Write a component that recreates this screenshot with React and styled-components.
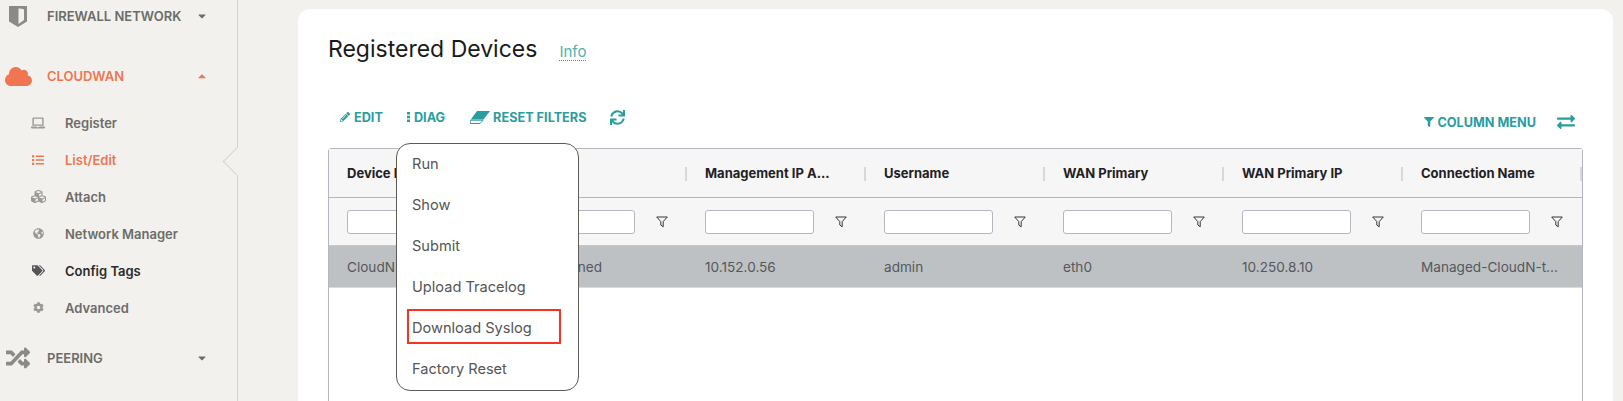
import React from 'react';
import styled, { createGlobalStyle } from 'styled-components';
import {
  FaCaretDown, FaCaretUp, FaCloud, FaLaptop, FaList, FaCubes, FaGlobeAmericas, FaTags, FaCog,
  FaRandom, FaPencilAlt, FaSync, FaFilter, FaExchangeAlt,
} from 'react-icons/fa';

const GlobalStyle = createGlobalStyle`
  html, body {
    margin: 0;
    height: 401px;
    overflow: hidden;
    background: #f2f1ee;
    font-family: Inter, "Liberation Sans", sans-serif;
  }
`;

const Page = styled.div`
  display: flex;
  width: 1623px;
  height: 401px;
  overflow: hidden;
`;

const Sidebar = styled.nav`
  position: relative;
  flex: 0 0 238px;
  box-sizing: border-box;
  border-right: 1px solid #d4d3d0;
  padding-top: 4px;
`;

const Notch = styled.div`
  position: absolute;
  top: 151px;
  right: -11px;
  width: 21px;
  height: 21px;
  box-sizing: border-box;
  background: #f2f1ee;
  border-left: 1px solid #d4d3d0;
  border-bottom: 1px solid #d4d3d0;
  transform: rotate(45deg);
`;

const GroupRow = styled.div`
  display: flex;
  align-items: center;
  height: 24px;
  margin-top: ${({ $top }) => $top || 0}px;
  color: ${({ $active }) => ($active ? '#ef7651' : '#6d6c69')};
  font-size: 13px;
  font-weight: 600;
`;

const GroupIcon = styled.span`
  flex: 0 0 47px;
  display: flex;
  justify-content: center;
  padding-right: 11px;
  box-sizing: border-box;
  font-size: ${({ $size }) => $size || 24}px;
  color: ${({ $active }) => ($active ? '#ef7651' : '#8b8a87')};
`;

const GroupLabel = styled.span`
  flex: 0 0 149px;
`;

const Caret = styled.span`
  display: flex;
  font-size: 12px;
`;

const SubList = styled.div`
  margin-top: 16px;
  margin-bottom: 20px;
`;

const SubItem = styled.div`
  display: flex;
  align-items: center;
  height: 37px;
  padding-left: 20px;
  color: ${({ $color }) => $color || '#6d6c69'};
  font-size: 13px;
  font-weight: 600;
`;

const SubIcon = styled.span`
  flex: 0 0 45px;
  display: flex;
  justify-content: center;
  padding-right: 9px;
  box-sizing: border-box;
  font-size: ${({ $size }) => $size || 13}px;
  color: ${({ $color }) => $color || '#9a9996'};
`;

const Main = styled.main`
  flex: 1;
  padding: 9px 10px 0 60px;
  min-width: 0;
`;

const Card = styled.section`
  position: relative;
  height: 420px;
  box-sizing: border-box;
  background: #fff;
  border-radius: 12px 12px 0 0;
  padding: 20px 30px 0;
`;

const TitleRow = styled.div`
  display: flex;
  align-items: baseline;
  height: 40px;
`;

const Title = styled.h1`
  margin: 0;
  font-size: 23px;
  font-weight: 400;
  color: #1a1a1a;
  line-height: 40px;
`;

const InfoLink = styled.a`
  margin-left: 22px;
  font-size: 15px;
  color: #4fb3b1;
  border-bottom: 1px dotted #2a9d9f;
  line-height: 17px;
`;

const Toolbar = styled.div`
  display: flex;
  align-items: center;
  height: 32px;
  margin-top: 32px;
  padding: 0 8px 0 12px;
`;

const ToolButton = styled.button`
  display: flex;
  align-items: center;
  gap: ${({ $gap }) => $gap || 4}px;
  margin: ${({ $margin }) => $margin || '0 24px 0 0'};
  padding: 0;
  border: 0;
  background: none;
  color: #2a9d9f;
  font-family: inherit;
  font-size: 12.7px;
  font-weight: 700;
  svg { display: block; }
`;

const Spacer = styled.div`
  flex: 1;
`;

const TableBox = styled.div`
  height: 300px;
  border: 1px solid #b4b6c0;
  border-radius: 3px 3px 0 0;
  margin-top: 15px;
`;

const Row = styled.div`
  display: grid;
  grid-template-columns: repeat(7, 179px);
  overflow: hidden;
  height: ${({ $height }) => $height}px;
  box-sizing: border-box;
  background: ${({ $bg }) => $bg};
  border-bottom: 1px solid ${({ $line }) => $line};
`;

const HeadCell = styled.div`
  position: relative;
  display: flex;
  align-items: center;
  padding-left: 18px;
  font-size: 13px;
  font-weight: 700;
  color: #1f2024;
  &::after {
    content: '';
    position: absolute;
    right: 0;
    top: 18px;
    width: 2px;
    height: 14px;
    background: #d6d8dc;
  }
`;

const FilterCell = styled.div`
  display: flex;
  align-items: center;
  padding-left: 18px;
`;

const FilterInput = styled.input`
  width: 109px;
  height: 24px;
  box-sizing: border-box;
  border: 1px solid #b4b6c0;
  border-radius: 3px;
  background: #fff;
`;

const FilterMark = styled.svg`
  width: 12px;
  height: 12px;
  margin-left: 21px;
  fill: none;
  stroke: #33353a;
  stroke-width: 1;
`;

const DataCell = styled.div`
  display: flex;
  align-items: center;
  padding-left: 18px;
  font-size: 13.6px;
  color: #55585c;
  white-space: nowrap;
`;

const Menu = styled.ul`
  position: absolute;
  left: 98px;
  top: 134px;
  width: 183px;
  height: 248px;
  box-sizing: border-box;
  margin: 0;
  padding: 0;
  list-style: none;
  background: #fff;
  border: 1px solid #5e5a56;
  border-radius: 14px;
`;

const MenuItem = styled.li`
  display: flex;
  align-items: center;
  height: 41px;
  box-sizing: border-box;
  padding: 0 0 1px 15px;
  font-size: 14.6px;
  color: #555;
`;

const Highlight = styled.div`
  position: absolute;
  left: 10px;
  top: 165px;
  width: 154px;
  height: 35px;
  box-sizing: border-box;
  border: 2px solid #f5331f;
`;

const ShieldIcon = () => (
  <svg width="18" height="21" viewBox="0 0 18 21">
    <path fillRule="evenodd" d="M0 0h18v15.5L9 21 0 15.5zM9.5 2.5V18L15 14V3.5C14 2.7 11 2.5 9.5 2.5z" fill="#8b8a87" />
  </svg>
);

const EraserIcon = () => (
  <svg width="20" height="13" viewBox="0 0 20 13">
    <path d="M7 0h13l-6.5 8.5H.8z" fill="#2a9d9f" />
    <path d="M.5 9.2h12.6L10 12.5H0z" fill="none" stroke="#2a9d9f" />
  </svg>
);

const DotsIcon = () => (
  <svg width="3" height="10" viewBox="0 0 3 10">
    <path d="M0 0h3v2.4H0zM0 3.8h3v2.4H0zM0 7.6h3V10H0z" fill="#2a9d9f" />
  </svg>
);

const columns = ['Device Name', 'Status', 'Management IP A...', 'Username', 'WAN Primary', 'WAN Primary IP', 'Connection Name'];
const values = ['CloudN', 'Unassigned', '10.152.0.56', 'admin', 'eth0', '10.250.8.10', 'Managed-CloudN-t...'];
const subItems = [
  { label: 'Register', icon: <FaLaptop />, size: 14 },
  { label: 'List/Edit', icon: <FaList />, size: 12, color: '#ef7651', iconColor: '#ef7651' },
  { label: 'Attach', icon: <FaCubes />, size: 15 },
  { label: 'Network Manager', icon: <FaGlobeAmericas />, size: 11 },
  { label: 'Config Tags', icon: <FaTags />, size: 13, color: '#2b2b2b', iconColor: '#55555a' },
  { label: 'Advanced', icon: <FaCog />, size: 11 },
];
const menuItems = ['Run', 'Show', 'Submit', 'Upload Tracelog', 'Download Syslog', 'Factory Reset'];

export default function App() {
  return (
    <Page>
      <GlobalStyle />
      <Sidebar>
        <GroupRow>
          <GroupIcon><ShieldIcon /></GroupIcon>
          <GroupLabel>FIREWALL NETWORK</GroupLabel>
          <Caret><FaCaretDown /></Caret>
        </GroupRow>
        <GroupRow $active $top={36}>
          <GroupIcon $active $size={27}><FaCloud /></GroupIcon>
          <GroupLabel>CLOUDWAN</GroupLabel>
          <Caret><FaCaretUp /></Caret>
        </GroupRow>
        <SubList>
          {subItems.map((item) => (
            <SubItem key={item.label} $color={item.color}>
              <SubIcon $color={item.iconColor} $size={item.size}>{item.icon}</SubIcon>
              {item.label}
            </SubItem>
          ))}
        </SubList>
        <GroupRow>
          <GroupIcon $size={24}><FaRandom /></GroupIcon>
          <GroupLabel>PEERING</GroupLabel>
          <Caret><FaCaretDown /></Caret>
        </GroupRow>
        <Notch />
      </Sidebar>
      <Main>
        <Card>
          <TitleRow>
            <Title>Registered Devices</Title>
            <InfoLink>Info</InfoLink>
          </TitleRow>
          <Toolbar>
            <ToolButton><FaPencilAlt size={10} />EDIT</ToolButton>
            <ToolButton $margin="0 25px 0 0"><DotsIcon />DIAG</ToolButton>
            <ToolButton $gap={3}><EraserIcon />RESET FILTERS</ToolButton>
            <ToolButton><FaSync size={15} /></ToolButton>
            <Spacer />
            <ToolButton $gap={3} $margin="10px 0 0 0"><FaFilter size={10} />COLUMN MENU</ToolButton>
            <ToolButton $margin="10px 0 0 21px"><FaExchangeAlt size={18} /></ToolButton>
          </Toolbar>
          <TableBox>
            <Row $height={49} $bg="#f6f6f7" $line="#b4b6c0">
              {columns.map((name) => <HeadCell key={name}>{name}</HeadCell>)}
            </Row>
            <Row $height={48} $bg="#f6f6f7" $line="#c6c8cc">
              {columns.map((name) => (
                <FilterCell key={name}>
                  <FilterInput />
                  <FilterMark viewBox="0 0 12 12"><path d="M.7 1h10.6L7.2 5.6v5.2L4.8 9V5.6z" /></FilterMark>
                </FilterCell>
              ))}
            </Row>
            <Row $height={42} $bg="#bdc1c3" $line="#d9dbde">
              {values.map((value) => <DataCell key={value}>{value}</DataCell>)}
            </Row>
          </TableBox>
          <Menu>
            {menuItems.map((item) => <MenuItem key={item}>{item}</MenuItem>)}
            <Highlight />
          </Menu>
        </Card>
      </Main>
    </Page>
  );
}
